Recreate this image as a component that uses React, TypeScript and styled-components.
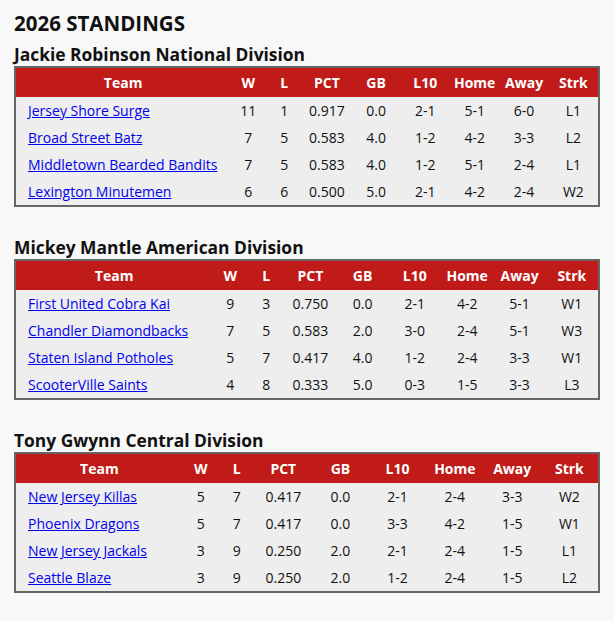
import React from "react";
import styled, { createGlobalStyle } from "styled-components";

const Global = createGlobalStyle`
  html, body { margin: 0; padding: 0; background: #f8f8f8; }
  body { font-family: "Open Sans", "Noto Sans", sans-serif; color: #111; }
`;

const Page = styled.div`
  padding: 6px 14px 20px;
`;

const Title = styled.h1`
  font-size: 20.5px;
  font-weight: 700;
  margin: 0 0 2px;
  line-height: 34px;
`;

const Section = styled.section`
  margin-bottom: 28px;
`;

const DivisionName = styled.h2`
  font-size: 17.4px;
  font-weight: 700;
  margin: 0;
  line-height: 24px;
`;

const Table = styled.table`
  width: 100%;
  border-collapse: collapse;
  border: 2px solid #666;
  background: #eeeeee;
  font-size: 14px;
  white-space: nowrap;
`;

const Col = styled.col<{ $w?: string }>`
  width: ${(p) => p.$w ?? "auto"};
`;

const HeadCell = styled.th`
  background: #c01b18;
  color: #fff;
  font-weight: 700;
  height: 29px;
  padding: 0 4px;
  text-align: center;
`;

const Cell = styled.td<{ $left?: boolean }>`
  height: 27px;
  padding: 0 ${(p) => (p.$left ? "12px" : "4px")};
  text-align: ${(p) => (p.$left ? "left" : "center")};
`;

const Value = styled.span<{ $narrow?: boolean }>`
  display: inline-block;
  min-width: ${(p) => (p.$narrow ? "0" : "41px")};
`;

const TeamLink = styled.a`
  color: #0000ee;
  text-decoration: underline;
`;

type Row = [string, number, number, string, string, string, string, string, string];

const divisions: { name: string; rows: Row[] }[] = [
  {
    name: "Jackie Robinson National Division",
    rows: [
      ["Jersey Shore Surge", 11, 1, "0.917", "0.0", "2-1", "5-1", "6-0", "L1"],
      ["Broad Street Batz", 7, 5, "0.583", "4.0", "1-2", "4-2", "3-3", "L2"],
      ["Middletown Bearded Bandits", 7, 5, "0.583", "4.0", "1-2", "5-1", "2-4", "L1"],
      ["Lexington Minutemen", 6, 6, "0.500", "5.0", "2-1", "4-2", "2-4", "W2"],
    ],
  },
  {
    name: "Mickey Mantle American Division",
    rows: [
      ["First United Cobra Kai", 9, 3, "0.750", "0.0", "2-1", "4-2", "5-1", "W1"],
      ["Chandler Diamondbacks", 7, 5, "0.583", "2.0", "3-0", "2-4", "5-1", "W3"],
      ["Staten Island Potholes", 5, 7, "0.417", "4.0", "1-2", "2-4", "3-3", "W1"],
      ["ScooterVille Saints", 4, 8, "0.333", "5.0", "0-3", "1-5", "3-3", "L3"],
    ],
  },
  {
    name: "Tony Gwynn Central Division",
    rows: [
      ["New Jersey Killas", 5, 7, "0.417", "0.0", "2-1", "2-4", "3-3", "W2"],
      ["Phoenix Dragons", 5, 7, "0.417", "0.0", "3-3", "4-2", "1-5", "W1"],
      ["New Jersey Jackals", 3, 9, "0.250", "2.0", "2-1", "2-4", "1-5", "L1"],
      ["Seattle Blaze", 3, 9, "0.250", "2.0", "1-2", "2-4", "1-5", "L2"],
    ],
  },
];

const headers = ["Team", "W", "L", "PCT", "GB", "L10", "Home", "Away", "Strk"];
const colWidths = [undefined, "36px", "36px", undefined, undefined, undefined, undefined, undefined, undefined];

export default function App() {
  return (
    <>
      <Global />
      <Page>
        <Title>2026 STANDINGS</Title>
        {divisions.map((d) => (
          <Section key={d.name}>
            <DivisionName>{d.name}</DivisionName>
            <Table>
              <colgroup>
                {colWidths.map((w, i) => (
                  <Col key={i} $w={w} />
                ))}
              </colgroup>
              <thead>
                <tr>
                  {headers.map((h) => (
                    <HeadCell key={h}>{h}</HeadCell>
                  ))}
                </tr>
              </thead>
              <tbody>
                {d.rows.map((r) => (
                  <tr key={r[0]}>
                    <Cell $left>
                      <TeamLink href="#">{r[0]}</TeamLink>
                    </Cell>
                    {r.slice(1).map((v, i) => (
                      <Cell key={i}>
                        <Value $narrow={i < 2}>{v}</Value>
                      </Cell>
                    ))}
                  </tr>
                ))}
              </tbody>
            </Table>
          </Section>
        ))}
      </Page>
    </>
  );
}
